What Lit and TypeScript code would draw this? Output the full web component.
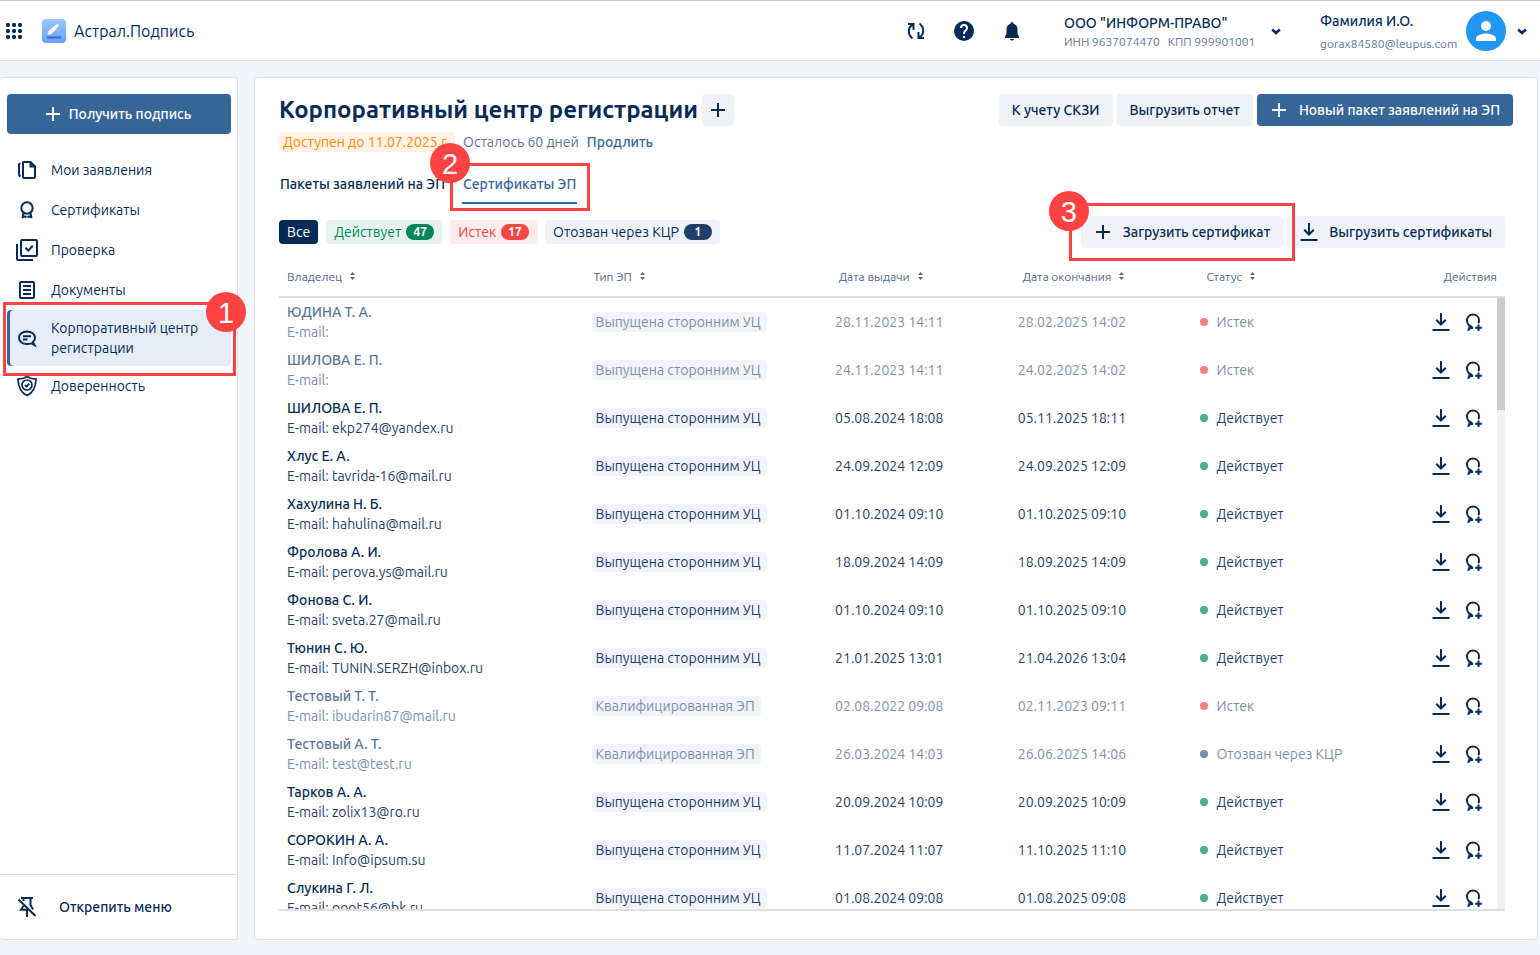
import { LitElement, html, css, svg, nothing, type TemplateResult } from "lit";
import { customElement, property, state } from "lit/decorators.js";
import { classMap } from "lit/directives/class-map.js";

type Status = "active" | "expired" | "revoked";

interface Certificate {
  owner: string;
  email: string;
  kind: string;
  issued: string;
  expires: string;
  status: Status;
}

const STATUS_LABEL: Record<Status, string> = {
  active: "Действует",
  expired: "Истек",
  revoked: "Отозван через КЦР",
};

const EXTERNAL = "Выпущена сторонним УЦ";
const QUALIFIED = "Квалифицированная ЭП";

const CERTIFICATES: Certificate[] = [
  { owner: "ЮДИНА Т. А.", email: "", kind: EXTERNAL, issued: "28.11.2023 14:11", expires: "28.02.2025 14:02", status: "expired" },
  { owner: "ШИЛОВА Е. П.", email: "", kind: EXTERNAL, issued: "24.11.2023 14:11", expires: "24.02.2025 14:02", status: "expired" },
  { owner: "ШИЛОВА Е. П.", email: "ekp274@yandex.ru", kind: EXTERNAL, issued: "05.08.2024 18:08", expires: "05.11.2025 18:11", status: "active" },
  { owner: "Хлус Е. А.", email: "tavrida-16@mail.ru", kind: EXTERNAL, issued: "24.09.2024 12:09", expires: "24.09.2025 12:09", status: "active" },
  { owner: "Хахулина Н. Б.", email: "hahulina@mail.ru", kind: EXTERNAL, issued: "01.10.2024 09:10", expires: "01.10.2025 09:10", status: "active" },
  { owner: "Фролова А. И.", email: "perova.ys@mail.ru", kind: EXTERNAL, issued: "18.09.2024 14:09", expires: "18.09.2025 14:09", status: "active" },
  { owner: "Фонова С. И.", email: "sveta.27@mail.ru", kind: EXTERNAL, issued: "01.10.2024 09:10", expires: "01.10.2025 09:10", status: "active" },
  { owner: "Тюнин С. Ю.", email: "TUNIN.SERZH@inbox.ru", kind: EXTERNAL, issued: "21.01.2025 13:01", expires: "21.04.2026 13:04", status: "active" },
  { owner: "Тестовый Т. Т.", email: "ibudarin87@mail.ru", kind: QUALIFIED, issued: "02.08.2022 09:08", expires: "02.11.2023 09:11", status: "expired" },
  { owner: "Тестовый А. Т.", email: "test@test.ru", kind: QUALIFIED, issued: "26.03.2024 14:03", expires: "26.06.2025 14:06", status: "revoked" },
  { owner: "Тарков А. А.", email: "zolix13@ro.ru", kind: EXTERNAL, issued: "20.09.2024 10:09", expires: "20.09.2025 10:09", status: "active" },
  { owner: "СОРОКИН А. А.", email: "Info@ipsum.su", kind: EXTERNAL, issued: "11.07.2024 11:07", expires: "11.10.2025 11:10", status: "active" },
  { owner: "Слукина Г. Л.", email: "ooot56@bk.ru", kind: EXTERNAL, issued: "01.08.2024 09:08", expires: "01.08.2025 09:08", status: "active" },
];

const ICONS: Record<string, TemplateResult> = {
  apps: svg`${[6, 12, 18].map((y) => [6, 12, 18].map((x) => svg`<rect class="fill" x=${x - 2} y=${y - 2} width="4" height="4" rx="1.4"/>`))}`,
  plus: svg`<path d="M12 5v14M5 12h14"/>`,
  refresh: svg`<path d="M4 5h5.500v6M9 5.500C4 8 3 15 8.500 19.500M20 19h-5.500v-6M15 18.500C20 16 21 9 15.500 4.500"/>`,
  help: svg`<path class="fill" d="M15.070,11.250L14.170,12.170C13.450,12.890 13,13.500 13,15H11V14.500C11,13.390 11.450,12.390 12.170,11.670L13.410,10.410C13.780,10.050 14,9.550 14,9C14,7.890 13.100,7 12,7A2,2 0 0,0 10,9H8A4,4 0 0,1 12,5A4,4 0 0,1 16,9C16,9.880 15.640,10.670 15.070,11.250M13,19H11V17H13M12,2A10,10 0 0,0 2,12A10,10 0 0,0 12,22A10,10 0 0,0 22,12C22,6.470 17.500,2 12,2Z"/>`,
  bell: svg`<path class="fill" d="M12 21.500c1.100 0 2-.7 2-1.500h-4c0 .8.900 1.500 2 1.500zm5.500-6.500v-4.500c0-3-1.500-5.100-4-5.800V4.500a1.500 1.500 0 0 0-3 0v.2c-2.500.7-4 2.800-4 5.800V15L5 17.500V19h14v-1.500z"/>`,
  chevron: svg`<path class="bold" d="M8.200 10.500 12 14l3.800-3.500"/>`,
  papers: svg`<path d="M8.500 4H15.500l4.500 4.500V19a1 1 0 0 1-1 1H9a1 1 0 0 1-1-1V4.500ZM5.500 5.500C4.500 5.500 4 6 4 7v9.500C4 17.500 4.500 18 5.500 18.500"/><path class="fill" d="M14.500 4v5.500H20Z"/>`,
  award: svg`<circle cx="12" cy="10" r="5.700"/><path d="M8.500 15 7.500 20M7 19.500l3-1.200 1.500 1.200M15.500 15l1 5M17 19.500l-3-1.200-1.500 1.200"/>`,
  checks: svg`<rect x="6" y="2" width="16" height="16" rx="1"/><path d="M2 6v15a1 1 0 0 0 1 1h15M10.500 9.800l2.700 2.700 4.600-4.800"/>`,
  doc: svg`<rect x="5" y="4" width="14" height="16" rx="1"/><path d="M8 8h8M8 12h8M8 16h8"/>`,
  chat: svg`<path d="M19.500 19l-3-1.600c-1.300.4-2.800.6-4.500.6-4.600 0-8-2.700-8-6.200s3.400-6.300 8-6.300 8 2.800 8 6.300c0 1.700-.8 3.200-2 4.300Z"/><path d="M8 10.200h8M8 13.500h4.500"/>`,
  shield: svg`<path class="thin" d="M12 2.500c2.500 1.800 5.500 2.700 9 2.700-.3 7.800-2.300 13.300-9 16.300C5.300 18.500 3.300 13 3 5.200c3.500 0 6.500-.9 9-2.700Z"/><circle class="thin" cx="12" cy="11" r="5"/><path class="thin" d="M9.800 11l1.700 1.700 2.800-3"/>`,
  unpin: svg`<path d="M6 3h12M8.500 3.500V6M15.500 3.500V10l2.500 4.500M3.500 4.500l17 16.500M8.500 11 6 14.700h8M12 15v7"/>`,
  download: svg`<path d="M12 3v11M7.200 9.800 12 14.500l4.800-4.700M3.500 20h17"/>`,
  reissue: svg`<path d="M7.800 15.200C6.700 14 6 12.300 6 10.500 6 6.900 8.700 4.500 12 4.500s6 2.400 6 6c0 1-.2 1.900-.6 2.700M17.500 14.500v6.500M14.200 17.800h6.600"/><path class="fill" d="M7 14.500h2l3.200 2.600v2L9.700 19l-1.400 1.800H6.200L7.600 17Z"/>`,
  logo: svg`<path d="M5 18.500h14" class="line"/><path class="fill" d="M5.500 16l1-4L14.500 5.300c1-.8 3 .9 2 2L9.500 15Z"/>`,
};

@customElement("ui-icon")
export class UiIcon extends LitElement {
  @property() name = "";

  static styles = css`
    :host { display: inline-flex; flex: none; width: 24px; height: 24px; }
    svg { width: 100%; height: 100%; fill: none; stroke: currentColor; stroke-width: 2; }
    .fill { fill: currentColor; stroke: none; }
    .bold { stroke-width: 2.6; }
    .thin { stroke-width: 1.7; }
    .line { stroke: #2f6fd0; }
  `;

  render() {
    return html`<svg viewBox="0 0 24 24" aria-hidden="true">${ICONS[this.name] ?? nothing}</svg>`;
  }
}

const base = css`
  * { box-sizing: border-box; }
  button {
    font: inherit;
    color: inherit;
    margin: 0;
    padding: 0;
    border: 0;
    background: none;
    cursor: pointer;
    white-space: nowrap;
  }
  a { color: inherit; text-decoration: none; }
  .callout {
    position: absolute;
    z-index: 2;
    border: 3px solid #ff4242;
    pointer-events: none;
  }
  .callout b {
    position: absolute;
    width: 40px;
    height: 40px;
    border-radius: 50%;
    background: #ff4242;
    color: #fff;
    font: 400 29px/42px "Liberation Sans", sans-serif;
    text-align: center;
  }
`;

@customElement("app-header")
export class AppHeader extends LitElement {
  static styles = [
    base,
    css`
      :host {
        display: flex;
        align-items: center;
        height: 61px;
        padding: 0 6px 0 2px;
        background: #fff;
        border-top: 1px solid #c8c8c8;
        border-bottom: 1px solid #dbe1e8;
      }
      button { display: inline-flex; }
      .logo {
        display: inline-flex;
        width: 24px;
        height: 24px;
        margin: 0 8px 0 16px;
        border-radius: 4px;
        color: #fff;
        background: linear-gradient(#9cc8f8, #66a1ff);
      }
      .product { flex: 1; font-size: 16px; }
      .tools { display: flex; gap: 24px; margin-right: 40px; }
      .org { min-width: 192px; margin-right: 8px; padding-top: 2px; }
      .user { min-width: 138px; margin: 0 8px 0 32px; padding-top: 2px; }
      .name { font-weight: 500; line-height: 20px; }
      .sub { color: #5d7595; font-size: 12px; line-height: 18px; }
      .sub span + span { margin-left: 8px; }
      .user .name { line-height: 24px; }
      .user .sub { line-height: 22px; }
      .avatar { display: block; width: 40px; height: 40px; margin-right: 4px; }
    `,
  ];

  render() {
    return html`
      <button aria-label="Сервисы"><ui-icon name="apps"></ui-icon></button>
      <span class="logo"><ui-icon name="logo"></ui-icon></span>
      <span class="product">Астрал.Подпись</span>
      <div class="tools">
        <button aria-label="Обновить"><ui-icon name="refresh"></ui-icon></button>
        <button aria-label="Помощь"><ui-icon name="help"></ui-icon></button>
        <button aria-label="Уведомления"><ui-icon name="bell"></ui-icon></button>
      </div>
      <div class="org">
        <div class="name">ООО "ИНФОРМ-ПРАВО"</div>
        <div class="sub"><span>ИНН 9637074470</span><span>КПП 999901001</span></div>
      </div>
      <button aria-label="Выбрать организацию"><ui-icon name="chevron"></ui-icon></button>
      <div class="user">
        <div class="name">Фамилия И.О.</div>
        <div class="sub">gorax84580@leupus.com</div>
      </div>
      <svg class="avatar" viewBox="0 0 40 40" aria-hidden="true">
        <circle cx="20" cy="20" r="20" fill="#2196f3"></circle>
        <circle cx="20" cy="15" r="5" fill="#fff"></circle>
        <path d="M10 30v-2.500c0-3.300 6.600-5 10-5s10 1.700 10 5V30Z" fill="#fff"></path>
      </svg>
      <button aria-label="Меню пользователя"><ui-icon name="chevron"></ui-icon></button>
    `;
  }
}

@customElement("app-sidebar")
export class AppSidebar extends LitElement {
  static styles = [
    base,
    css`
      :host {
        display: flex;
        flex-direction: column;
        background: #fff;
        border: 1px solid #dce1e8;
        border-left: 0;
        border-radius: 4px;
      }
      .create {
        display: flex;
        align-items: center;
        justify-content: center;
        gap: 4px;
        height: 40px;
        margin: 16px 6px 16px 7px;
        padding-right: 6px;
        border-radius: 4px;
        background: #366697;
        color: #fff;
        font-weight: 500;
      }
      nav { flex: 1; padding: 0 6px 0 7px; }
      .item {
        position: relative;
        display: flex;
        align-items: center;
        gap: 12px;
        min-height: 40px;
        padding: 8px;
        border-radius: 4px;
      }
      .current { background: #e7edf6; box-shadow: inset 3px 0 #366697; }
      .callout { inset: -8px -5px -10px -4px; }
      .callout b { top: -13px; right: -13px; }
      .footer {
        display: flex;
        align-items: center;
        gap: 20px;
        height: 65px;
        padding-left: 15px;
        border-top: 1px solid #dce1e8;
        font-weight: 500;
        text-align: left;
      }
    `,
  ];

  private items = [
    { icon: "papers", label: "Мои заявления" },
    { icon: "award", label: "Сертификаты" },
    { icon: "checks", label: "Проверка" },
    { icon: "doc", label: "Документы" },
    { icon: "chat", label: "Корпоративный центр регистрации", current: true },
    { icon: "shield", label: "Доверенность" },
  ];

  render() {
    return html`
      <button class="create"><ui-icon name="plus"></ui-icon>Получить подпись</button>
      <nav>
        ${this.items.map(
          (i) => html`<a href="#" class=${classMap({ item: true, current: !!i.current })}>
            <ui-icon name=${i.icon}></ui-icon><span>${i.label}</span>
            ${i.current ? html`<span class="callout"><b>1</b></span>` : nothing}
          </a>`
        )}
      </nav>
      <button class="footer"><ui-icon name="unpin"></ui-icon>Открепить меню</button>
    `;
  }
}

@customElement("cert-table")
export class CertTable extends LitElement {
  @property({ attribute: false }) rows: Certificate[] = [];

  static styles = [
    base,
    css`
      :host { position: relative; display: flex; min-height: 0; }
      table { display: flex; flex-direction: column; flex: 1; min-width: 0; border-bottom: 2px solid #dfdfdf; }
      thead { display: block; border-bottom: 2px solid #dfdfdf; }
      tbody {
        display: block;
        flex: 1;
        min-height: 0;
        margin-right: 8px;
        overflow-y: auto;
        scrollbar-width: none;
      }
      tr { display: grid; grid-template-columns: 25% 20% 15% 15% 15% 10%; align-items: center; }
      th, td { padding: 4px 8px; text-align: left; white-space: nowrap; }
      th { padding: 13px 8px 11px; font-size: 12px; font-weight: 400; line-height: 16px; color: #506a8c; }
      th:last-child { text-align: right; }
      th button { display: inline-flex; align-items: center; gap: 8px; }
      .sort { width: 5px; height: 8px; margin-bottom: 2px; fill: #506a8c; }
      td { color: #1f4069; }
      .owner { font-weight: 500; color: #062b57; }
      .kind { display: inline-block; padding: 0 6px 0 4px; border-radius: 4px; background: #f0f4f8; }
      .dim td { color: #7b90ab; }
      .dim .owner { color: #5a7495; }
      .dot { display: inline-block; width: 8px; height: 8px; margin-right: 8px; border-radius: 50%; vertical-align: 1px; }
      .active .dot { background: #4cab88; }
      .expired .dot { background: #f77e7e; }
      .revoked .dot { background: #788dab; }
      .actions { display: flex; justify-content: flex-end; gap: 8px; padding-right: 12px; }
      .dim .actions, .actions { color: #062b57; }
      .actions button { display: inline-flex; }
      .track {
        position: absolute;
        top: 42px;
        right: 0;
        bottom: 2px;
        width: 8px;
        background: #f0f0f0;
      }
      .thumb { height: 112px; background: #cbcbcb; }
    `,
  ];

  private sortable = ["Владелец", "Тип ЭП", "Дата выдачи", "Дата окончания", "Статус"];

  render() {
    return html`
      <table>
        <thead>
          <tr>
            ${this.sortable.map(
              (h) => html`<th scope="col">
                <button>${h}<svg class="sort" viewBox="0 0 5 8" aria-hidden="true"><path d="M2.500 0L5 3H0zM2.500 8L0 5h5z"></path></svg></button>
              </th>`
            )}
            <th scope="col">Действия</th>
          </tr>
        </thead>
        <tbody>
          ${this.rows.map(
            (r) => html`<tr class="${r.status} ${r.status === "active" ? "" : "dim"}">
              <td><div class="owner">${r.owner}</div><div>E-mail: ${r.email}</div></td>
              <td><span class="kind">${r.kind}</span></td>
              <td>${r.issued}</td>
              <td>${r.expires}</td>
              <td><span class="dot"></span>${STATUS_LABEL[r.status]}</td>
              <td class="actions">
                <button aria-label="Скачать"><ui-icon name="download"></ui-icon></button>
                <button aria-label="Перевыпустить"><ui-icon name="reissue"></ui-icon></button>
              </td>
            </tr>`
          )}
        </tbody>
      </table>
      <div class="track"><div class="thumb"></div></div>
    `;
  }
}

@customElement("app-root")
export class AppRoot extends LitElement {
  @state() private filter: Status | "all" = "all";

  static styles = [
    base,
    css`
      :host {
        display: flex;
        flex-direction: column;
        height: 100vh;
        background: #f1f5f9;
        color: #062b57;
        font: 400 14px/20px Ubuntu, "Noto Sans", sans-serif;
      }
      .layout {
        display: grid;
        grid-template-columns: 238px minmax(0, 1fr);
        gap: 16px;
        flex: 1;
        min-height: 0;
        padding: 16px 2px 15px 0;
      }
      main {
        display: flex;
        flex-direction: column;
        min-height: 0;
        padding: 16px 24px 28px;
        background: #fff;
        border: 1px solid #dce1e8;
        border-radius: 4px;
      }
      .head { display: flex; align-items: center; gap: 4px; }
      h1 { margin: 0; font-size: 24px; font-weight: 600; line-height: 32px; white-space: nowrap; }
      .space { flex: 1; }
      .btn {
        position: relative;
        display: inline-flex;
        align-items: center;
        gap: 8px;
        height: 32px;
        padding: 0 13px;
        border-radius: 4px;
        background: #eff3f7;
        font-weight: 500;
      }
      .with-icon { padding-left: 10px; }
      .square { padding: 0 4px; }
      .primary { background: #366697; color: #fff; }
      .license { display: flex; gap: 8px; margin-top: 6px; }
      .until { padding: 0 6px 0 4px; border-radius: 4px; background: #fff1e6; color: #ff8b00; }
      .left { color: #5d7595; }
      .extend { color: #366697; font-weight: 500; }
      .tabs { display: flex; gap: 16px; margin: 12px 0; font-weight: 500; }
      .tabs button { position: relative; padding: 10px 1px 8px; border-bottom: 2px solid transparent; }
      .tabs .selected { color: #366697; border-color: #366697; }
      .tabs .callout { inset: -1px -13px -9px -12px; }
      .tabs .callout b { top: -23px; left: -23px; }
      .bar { display: flex; align-items: center; gap: 8px; margin: 0 8px 8px 0; }
      .bar .right { display: flex; gap: 4px; margin-left: auto; }
      .chip {
        display: inline-flex;
        align-items: center;
        gap: 5px;
        height: 24px;
        padding: 0 8px;
        border-radius: 4px;
        background: #eff3f7;
      }
      .count {
        min-width: 28px;
        border-radius: 8px;
        background: #20406a;
        color: #fff;
        font-size: 12px;
        font-weight: 700;
        line-height: 16px;
        text-align: center;
      }
      .all { background: #062b57; color: #fff; }
      .active { background: #e6f3ee; color: #00875a; }
      .active .count { background: #00875a; }
      .expired { background: #ffebeb; color: #f64646; }
      .expired .count { background: #f64646; }
      .upload .callout { inset: -13px -12px; }
      .upload .callout b { top: -15px; left: -23px; }
      cert-table { flex: 1; margin-right: 8px; }
    `,
  ];

  private chip(status: Status, count: number) {
    return html`<button class="chip ${status}" @click=${() => (this.filter = status)}>
      ${STATUS_LABEL[status]}<span class="count">${count}</span>
    </button>`;
  }

  render() {
    const rows = this.filter === "all" ? CERTIFICATES : CERTIFICATES.filter((c) => c.status === this.filter);
    return html`
      <app-header></app-header>
      <div class="layout">
        <app-sidebar></app-sidebar>
        <main>
          <div class="head">
            <h1>Корпоративный центр регистрации</h1>
            <button class="btn square" aria-label="Добавить"><ui-icon name="plus"></ui-icon></button>
            <span class="space"></span>
            <button class="btn">К учету СКЗИ</button>
            <button class="btn">Выгрузить отчет</button>
            <button class="btn with-icon primary"><ui-icon name="plus"></ui-icon>Новый пакет заявлений на ЭП</button>
          </div>
          <div class="license">
            <span class="until">Доступен до 11.07.2025 г.</span>
            <span class="left">Осталось 60 дней</span>
            <a class="extend" href="#">Продлить</a>
          </div>
          <div class="tabs" role="tablist">
            <button role="tab" aria-selected="false">Пакеты заявлений на ЭП</button>
            <button role="tab" aria-selected="true" class="selected">
              Сертификаты ЭП<span class="callout"><b>2</b></span>
            </button>
          </div>
          <div class="bar">
            <button class="chip all" @click=${() => (this.filter = "all")}>Все</button>
            ${this.chip("active", 47)} ${this.chip("expired", 17)} ${this.chip("revoked", 1)}
            <div class="right">
              <button class="btn with-icon upload"><span class="callout"><b>3</b></span><ui-icon name="plus"></ui-icon><span>Загрузить сертификат</span></button>
              <button class="btn with-icon"><ui-icon name="download"></ui-icon>Выгрузить сертификаты</button>
            </div>
          </div>
          <cert-table .rows=${rows}></cert-table>
        </main>
      </div>
    `;
  }
}
